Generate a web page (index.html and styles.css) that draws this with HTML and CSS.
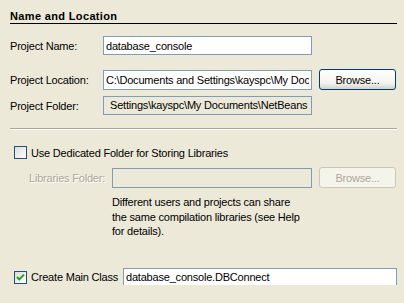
FILE: index.html
```html
<!DOCTYPE html>
<html lang="en">
<head>
    <meta charset="UTF-8">
    <title>Name and Location</title>
    <link rel="stylesheet" href="styles.css">
</head>
<body>
    <h2 class="section-title">Name and Location</h2>

    <div class="form-row">
        <label for="projectName">Project Name:</label>
        <input type="text" id="projectName" class="field" value="database_console" />
    </div>

    <div class="form-row location-row">
        <label for="projectLocation">Project Location:</label>
        <input type="text" id="projectLocation" class="field" value="C:\Documents and Settings\kayspc\My Documents\NetBeansProjects" />
        <button class="browse">Browse...</button>
    </div>

    <div class="form-row folder-row">
        <label>Project Folder:</label>
        <div class="field readonly"><span>Settings\kayspc\My Documents\NetBeans</span></div>
    </div>

    <div class="separator"></div>

    <div class="check-row">
        <span class="checkbox"></span>
        <span>Use Dedicated Folder for Storing Libraries</span>
    </div>

    <div class="form-row libs-row">
        <label class="disabled">Libraries Folder:</label>
        <input type="text" class="field" disabled />
        <button class="browse" disabled>Browse...</button>
    </div>

    <p class="hint">Different users and projects can share<br>the same compilation libraries (see Help<br>for details).</p>

    <div class="check-row main-class-row">
        <span class="checkbox checked">
            <svg width="11" height="11" viewBox="0 0 11 11"><path d="M2 5 L4.3 7.4 L9 2.6" fill="none" stroke="#21a121" stroke-width="2"/></svg>
        </span>
        <span class="check-label">Create Main Class</span>
        <input type="text" class="field main-class" value="database_console.DBConnect" />
    </div>
</body>
</html>
```

FILE: styles.css
```css
/* XP style wizard panel */
body {
    margin: 0;
    padding: 0 7px 0 10px;
    background-color: #ece9d8;
    font-family: "Liberation Sans", Arial, sans-serif;
    font-size: 11px;
    letter-spacing: -0.2px;
    color: #000;
    height: 303px;
    overflow: hidden;
}

label,
.check-row span {
    white-space: nowrap;
}

.section-title {
    margin: 0;
    padding-top: 9px;
    font-size: 11px;
    line-height: 14px;
    font-weight: bold;
    letter-spacing: 0.35px;
    border-bottom: 1px solid #000;
}

.form-row {
    display: grid;
    grid-template-columns: 86px 209px 77px;
    column-gap: 7px;
    align-items: center;
    margin-top: 12px;
}

.field {
    box-sizing: border-box;
    height: 19px;
    border: 1px solid #7f9db9;
    background-color: #fff;
    font: inherit;
    letter-spacing: inherit;
    padding: 0 2px;
    margin: 0;
    outline: none;
    color: #000;
}

.location-row {
    margin-top: 14px;
}

.location-row .field {
    height: 20px;
}

.folder-row {
    margin-top: 6px;
}

.readonly {
    background-color: #ece9d8;
    overflow: hidden;
    white-space: nowrap;
    line-height: 17px;
    padding-left: 6px;
}

.browse {
    box-sizing: border-box;
    height: 21px;
    border: 1px solid #003c74;
    border-radius: 3px;
    background: linear-gradient(#fff, #f4f3ee 70%, #d6d0c5);
    font: inherit;
    letter-spacing: inherit;
    color: #000;
    padding: 0;
}

.browse:disabled {
    border-color: #c9c7ba;
    background: #f5f4ea;
    color: #aca899;
}

.separator {
    margin-top: 13px;
    border-top: 1px solid #aca899;
    border-bottom: 1px solid #fff;
}

.check-row {
    display: flex;
    align-items: center;
    gap: 4px;
    margin-top: 16px;
    padding-left: 4px;
    height: 13px;
}

.checkbox {
    box-sizing: border-box;
    width: 13px;
    height: 13px;
    flex: none;
    border: 1px solid #1c5180;
    background: linear-gradient(135deg, #dcdcd7, #fff);
}

.checkbox svg {
    display: block;
}

.libs-row {
    margin-top: 8px;
    grid-template-columns: 76px 200px 77px;
    padding-left: 19px;
}

.libs-row .field {
    height: 20px;
    background-color: #ece9d8;
}

.disabled {
    color: #aca899;
    text-shadow: 1px 1px #fff;
}

.hint {
    margin: 7px 0 0 102px;
    line-height: 14.5px;
}

.main-class-row {
    margin-top: 30px;
    height: 17px;
}

.check-label {
    width: 88px;
    flex: none;
}

.main-class {
    flex: 1;
    min-width: 0;
    height: 17px;
    border-bottom: 0;
    margin-top: -1px;
}
```
